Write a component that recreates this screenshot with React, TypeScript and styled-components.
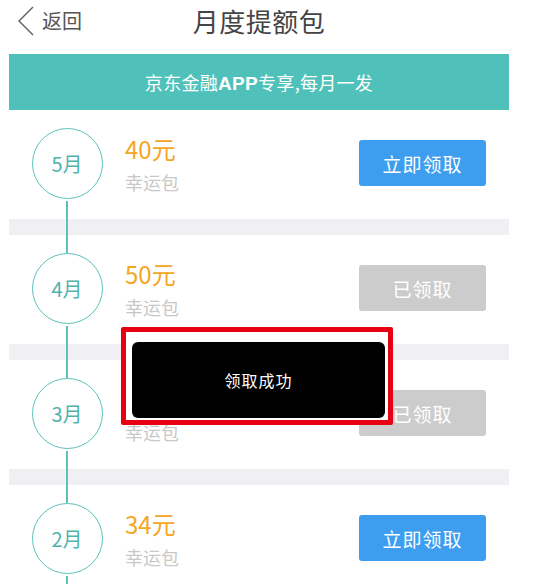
import React from "react";
import styled, { createGlobalStyle } from "styled-components";

const GlobalStyle = createGlobalStyle`
  html, body { margin: 0; padding: 0; background: #ffffff; }
  body {
    font-family: "Noto Sans CJK SC", "Noto Sans", "Liberation Sans", sans-serif;
    -webkit-font-smoothing: antialiased;
  }
`;

const Page = styled.div`
  position: relative;
  width: 543px;
  height: 584px;
  overflow: hidden;
  background: #ffffff;
`;

const Header = styled.header`
  display: grid;
  grid-template-columns: 1fr auto 1fr;
  align-items: center;
  width: 500px;
  height: 42px;
  margin: 0 0 12px 9px;
`;

const Back = styled.div`
  display: flex;
  align-items: center;
  gap: 8px;
  padding-left: 9px;
  color: #555555;
  font-size: 20px;
  line-height: 1;
`;

const Title = styled.h1`
  margin: 0;
  font-size: 26px;
  font-weight: 400;
  color: #444444;
  letter-spacing: 0.5px;
  line-height: 1;
`;

const Banner = styled.div`
  display: flex;
  align-items: center;
  justify-content: center;
  width: 500px;
  height: 56px;
  margin-left: 9px;
  background: #4fc1ba;
  color: #ffffff;
  font-size: 18px;
  letter-spacing: 0.3px;
  b { font-family: "Liberation Sans", sans-serif; font-weight: 700; font-size: 19px; }
`;

const List = styled.div`
  width: 500px;
  margin-left: 9px;
  display: flex;
  flex-direction: column;
`;

const Row = styled.div`
  display: flex;
  align-items: stretch;
  height: 109px;
`;

const Rail = styled.div`
  width: 116px;
  flex: none;
  display: flex;
  flex-direction: column;
  align-items: center;
`;

const Segment = styled.div<{ $hidden?: boolean }>`
  flex: 1;
  width: 1.5px;
  background: ${(p) => (p.$hidden ? "transparent" : "#5bc3bb")};
`;

const Circle = styled.div`
  box-sizing: border-box;
  width: 71px;
  height: 71px;
  flex: none;
  margin-bottom: 2px;
  border: 1.5px solid #5bc3bb;
  border-radius: 50%;
  display: flex;
  align-items: center;
  justify-content: center;
  color: #4fb3ab;
  font-size: 20px;
`;

const Info = styled.div`
  flex: 1;
  display: flex;
  flex-direction: column;
  justify-content: center;
  gap: 8px;
  padding-bottom: 2px;
`;

const Amount = styled.div`
  color: #f5a623;
  font-size: 24px;
  line-height: 28px;
`;

const Sub = styled.div`
  color: #c8c8c8;
  font-size: 18px;
  line-height: 22px;
`;

const ActionCell = styled.div`
  display: flex;
  align-items: center;
  padding-right: 23px;
  padding-bottom: 3px;
`;

const Button = styled.button<{ $done?: boolean }>`
  width: 127px;
  height: 46px;
  border: none;
  border-radius: 3px;
  background: ${(p) => (p.$done ? "#cccccc" : "#3d9ef0")};
  color: #ffffff;
  font-family: inherit;
  font-size: 19px;
  letter-spacing: 1px;
  padding: 0;
`;

const Gap = styled.div`
  height: 16px;
  background: #efeff4;
  display: flex;
`;

const GapRail = styled.div`
  width: 116px;
  display: flex;
  justify-content: center;
  &::before {
    content: "";
    width: 1.5px;
    background: #5bc3bb;
  }
`;

const Marker = styled.div`
  position: absolute;
  left: 121px;
  top: 327px;
  box-sizing: border-box;
  width: 272px;
  height: 98px;
  border: 5px solid #e60012;
  border-radius: 2px;
  background: #ffffff;
  padding: 10px 3px 2px 6px;
  display: flex;
`;

const Toast = styled.div`
  flex: 1;
  background: #000000;
  border-radius: 6px;
  display: flex;
  align-items: center;
  justify-content: center;
  color: #ffffff;
  font-size: 16px;
  letter-spacing: 1px;
`;

const items = [
  { month: "5月", amount: "40元", done: false },
  { month: "4月", amount: "50元", done: true },
  { month: "3月", amount: "50元", done: true },
  { month: "2月", amount: "34元", done: false },
];

export default function App() {
  return (
    <Page>
      <GlobalStyle />
      <Header>
        <Back>
          <svg width="16" height="30" viewBox="0 0 16 30" fill="none">
            <polyline points="15,1 1,15 15,29" stroke="#666666" strokeWidth="1.5" />
          </svg>
          <span>返回</span>
        </Back>
        <Title>月度提额包</Title>
        <div />
      </Header>
      <Banner>
        <span>
          京东金融<b>APP</b>专享,每月一发
        </span>
      </Banner>
      <List>
        {items.map((it, i) => (
          <React.Fragment key={it.month}>
            {i > 0 && (
              <Gap>
                <GapRail />
              </Gap>
            )}
            <Row>
              <Rail>
                <Segment $hidden={i === 0} />
                <Circle>{it.month}</Circle>
                <Segment />
              </Rail>
              <Info>
                <Amount>{it.amount}</Amount>
                <Sub>幸运包</Sub>
              </Info>
              <ActionCell>
                <Button $done={it.done}>{it.done ? "已领取" : "立即领取"}</Button>
              </ActionCell>
            </Row>
          </React.Fragment>
        ))}
      </List>
      <Marker>
        <Toast>领取成功</Toast>
      </Marker>
    </Page>
  );
}
